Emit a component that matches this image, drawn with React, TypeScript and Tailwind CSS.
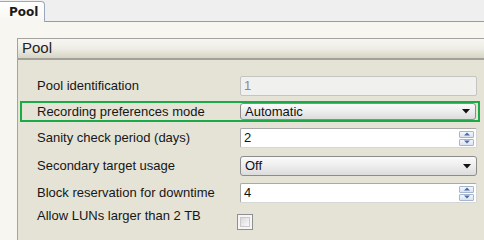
import React from 'react';

function Arrow() {
  return (
    <svg width="8" height="5" viewBox="0 0 8 5" className="shrink-0">
      <path d="M0 0 L8 0 L4 4.5 Z" fill="#111" />
    </svg>
  );
}

function Spinner() {
  return (
    <div className="flex flex-col gap-[1px] w-[15px] mr-[2px]">
      <div className="h-[7px] border border-[#a7b6cf] rounded-[1px] bg-gradient-to-b from-[#f4f7fc] to-[#dbe3f0] flex items-center justify-center">
        <svg width="6" height="4" viewBox="0 0 6 4">
          <path d="M0 3.5 L6 3.5 L3 0.5 Z" fill="#4a6aa5" />
        </svg>
      </div>
      <div className="h-[7px] border border-[#a7b6cf] rounded-[1px] bg-gradient-to-b from-[#f4f7fc] to-[#dbe3f0] flex items-center justify-center">
        <svg width="6" height="4" viewBox="0 0 6 4">
          <path d="M0 0.5 L6 0.5 L3 3.5 Z" fill="#4a6aa5" />
        </svg>
      </div>
    </div>
  );
}

function Dropdown({ value, h }: { value: string; h: string }) {
  return (
    <div
      className={`${h} flex items-center justify-between pl-[4px] pr-[5px] border border-[#8c8c8c] rounded-[3px] bg-gradient-to-b from-[#fbfbfb] via-[#ededed] to-[#dcdcdc] text-[13px] text-[#111]`}
    >
      <span>{value}</span>
      <Arrow />
    </div>
  );
}

export default function App() {
  return (
    <div className="w-[484px] h-[240px] overflow-hidden bg-[#f7f6f1] font-['Liberation_Sans',Arial,sans-serif] text-[#161616]">
      {/* tab strip */}
      <div className="flex h-[22px] bg-[#efefef]">
        <div className="w-[45px] h-[21px] mt-[1px] border-t border-r border-[#9aa8bd] rounded-tr-[4px] bg-gradient-to-b from-white to-[#f7f6f1] flex items-center pl-[9px] font-['DejaVu_Sans',sans-serif] font-bold text-[12px] text-[#1a1a1a]">
          Pool
        </div>
        <div className="flex-1 border-b border-[#7f9ed4]" />
      </div>

      <div className="pl-[17px] pt-[16px]">
        <div className="border-l border-t border-[#a3a3a0] bg-[#e4e3d6] h-[210px]">
          {/* group header */}
          <div className="h-[21px] border-b-2 border-[#a2a19a] bg-gradient-to-b from-[#f7f6f1] via-[#eeede5] to-[#d6d4c4] flex items-center pl-[4px] text-[15px] text-[#222]">
            Pool
          </div>

          <div className="flex flex-col">
            {/* Pool identification */}
            <div className="flex items-center mt-[16px] h-[20px]">
              <div className="w-[222px] pl-[19px] text-[13px]">Pool identification</div>
              <div className="w-[237px] h-[20px] border border-[#c4c4c0] rounded-[2px] bg-[#f0f0ee] flex items-center pl-[3px] text-[13px] text-[#8a8a8a]">
                1
              </div>
            </div>

            {/* Recording preferences mode */}
            <div className="flex items-center ml-[2px] mt-[5px] w-[460px] h-[21px] border-2 border-[#1aab48]">
              <div className="w-[218px] pl-[15px] text-[13px]">Recording preferences mode</div>
              <div className="w-[236px]">
                <Dropdown value="Automatic" h="h-[17px]" />
              </div>
            </div>

            {/* Sanity check period */}
            <div className="flex items-center mt-[6px] h-[20px]">
              <div className="w-[222px] pl-[19px] text-[13px]">Sanity check period (days)</div>
              <div className="w-[237px] h-[20px] border border-[#a9a9a9] border-b-[#d6d6d6] border-r-[#d6d6d6] rounded-[2px] bg-white flex items-center justify-between pl-[3px] text-[13px] text-[#111]">
                <span>2</span>
                <Spinner />
              </div>
            </div>

            {/* Secondary target usage */}
            <div className="flex items-center mt-[8px] h-[20px]">
              <div className="w-[222px] pl-[19px] text-[13px]">Secondary target usage</div>
              <div className="w-[237px]">
                <Dropdown value="Off" h="h-[20px]" />
              </div>
            </div>

            {/* Block reservation */}
            <div className="flex items-center mt-[7px] h-[20px]">
              <div className="w-[222px] pl-[19px] text-[13px]">Block reservation for downtime</div>
              <div className="w-[237px] h-[20px] border border-[#a9a9a9] border-b-[#d6d6d6] border-r-[#d6d6d6] rounded-[2px] bg-white flex items-center justify-between pl-[3px] text-[13px] text-[#111]">
                <span>4</span>
                <Spinner />
              </div>
            </div>

            {/* Allow LUNs */}
            <div className="flex items-start mt-[11px] h-[16px]">
              <div className="w-[219px] pl-[19px] text-[13px] -mt-[8px]">Allow LUNs larger than 2 TB</div>
              <div className="w-[16px] h-[16px] border border-[#8f8f8f] bg-[#f6f6f6] p-[2px]">
                <div className="w-full h-full border border-[#c9c9c9] bg-gradient-to-br from-[#d9d9d9] to-[#fafafa]" />
              </div>
            </div>
          </div>
        </div>
      </div>
    </div>
  );
}
